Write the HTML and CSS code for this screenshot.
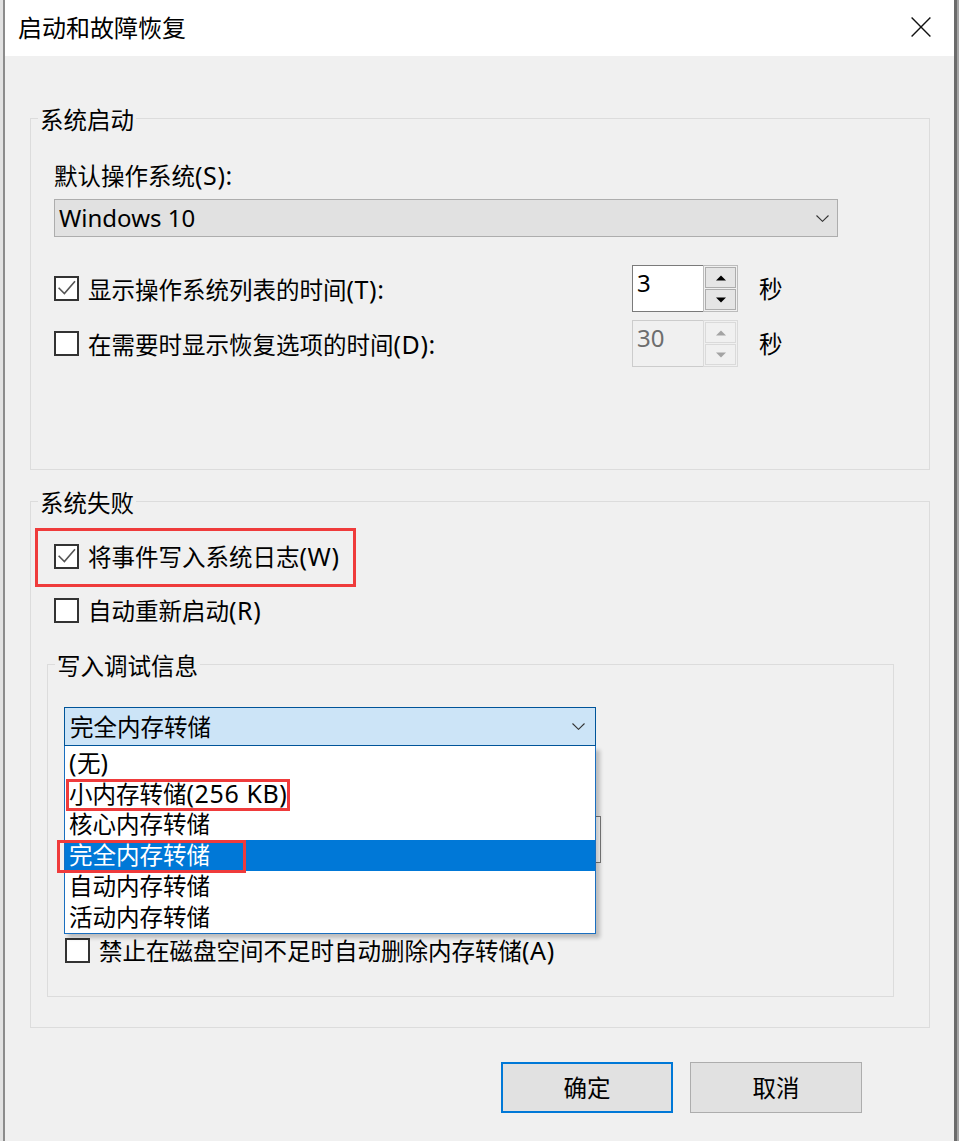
FILE: index.html
```html
<!DOCTYPE html>
<html lang="zh-CN">
<head>
<meta charset="utf-8">
<title>启动和故障恢复</title>
<link rel="stylesheet" href="styles.css">
</head>
<body>
<div class="screen">
  <div class="edge-left"></div>
  <div class="dialog">
    <div class="titlebar">
      <span class="title">启动和故障恢复</span>
      <span class="close"><svg width="20" height="20" viewBox="0 0 20 20"><path d="M0.6 0.6L19.4 19.4M19.4 0.6L0.6 19.4" stroke="#111" stroke-width="1.4" fill="none"/></svg></span>
    </div>
    <div class="content">
      <div class="group g1">
        <div class="legend lg1">系统启动</div>
        <div class="label">默认操作系统<span class="en">(S):</span></div>
        <div class="select">
          <span>Windows 10</span>
          <svg class="chev" width="13" height="7" viewBox="0 0 13 7"><path d="M0.5 0.5L6.5 6.3L12.5 0.5" stroke="#333" stroke-width="1.1" fill="none"/></svg>
        </div>
        <div class="row spin-row first">
          <span class="cb"><svg width="21" height="21" viewBox="0 0 21 21"><path d="M2.6 9.8L8.4 15.6L19 3.2" stroke="#555" stroke-width="1.6" fill="none"/></svg></span>
          <span class="cb-label wide">显示操作系统列表的时间<span class="en">(T):</span></span>
          <div class="spin">
            <div class="spin-text">3</div>
            <div class="spin-btns">
              <div class="spin-btn"><svg width="10" height="6" viewBox="0 0 10 6"><path d="M0 5.5L5 0.5L10 5.5Z" fill="#000"/></svg></div>
              <div class="spin-btn"><svg width="10" height="6" viewBox="0 0 10 6"><path d="M0 0.5L5 5.5L10 0.5Z" fill="#000"/></svg></div>
            </div>
          </div>
          <span class="unit">秒</span>
        </div>
        <div class="row spin-row second">
          <span class="cb"></span>
          <span class="cb-label wide">在需要时显示恢复选项的时间<span class="en">(D):</span></span>
          <div class="spin disabled">
            <div class="spin-text">30</div>
            <div class="spin-btns">
              <div class="spin-btn"><svg width="10" height="6" viewBox="0 0 10 6"><path d="M0 5.5L5 0.5L10 5.5Z" fill="#a3a3a3"/></svg></div>
              <div class="spin-btn"><svg width="10" height="6" viewBox="0 0 10 6"><path d="M0 0.5L5 5.5L10 0.5Z" fill="#a3a3a3"/></svg></div>
            </div>
          </div>
          <span class="unit">秒</span>
        </div>
      </div>

      <div class="group g2">
        <div class="legend lg1">系统失败</div>
        <div class="redbox">
          <span class="cb"><svg width="21" height="21" viewBox="0 0 21 21"><path d="M2.6 9.8L8.4 15.6L19 3.2" stroke="#555" stroke-width="1.6" fill="none"/></svg></span>
          <span class="cb-label">将事件写入系统日志<span class="en">(W)</span></span>
        </div>
        <div class="row plain r-restart">
          <span class="cb"></span>
          <span class="cb-label">自动重新启动<span class="en">(R)</span></span>
        </div>

        <div class="group g3">
          <div class="legend lg3">写入调试信息</div>
          <div class="combo-wrap">
            <div class="combo">
              <span>完全内存转储</span>
              <svg class="chev" width="13" height="7" viewBox="0 0 13 7"><path d="M0.5 0.5L6.5 6.3L12.5 0.5" stroke="#333" stroke-width="1.1" fill="none"/></svg>
            </div>
            <div class="list">
              <div class="item"><span class="en">(</span>无<span class="en">)</span></div>
              <div class="item">小内存转储<span class="en">(256 KB)</span></div>
              <div class="item">核心内存转储</div>
              <div class="item selected">完全内存转储</div>
              <div class="item">自动内存转储</div>
              <div class="item">活动内存转储</div>
              <div class="mark mark1"></div>
              <div class="mark mark2"></div>
            </div>
          </div>
          <div class="field"></div>
          <div class="row plain r-keep">
            <span class="cb"></span>
            <span class="cb-label">禁止在磁盘空间不足时自动删除内存转储<span class="en">(A)</span></span>
          </div>
        </div>
      </div>

      <div class="buttons">
        <div class="btn default">确定</div>
        <div class="btn">取消</div>
      </div>
    </div>
  </div>
  <div class="edge-right"></div>
</div>
</body>
</html>
```

FILE: styles.css
```css
html, body {
  margin: 0;
  padding: 0;
}
body {
  width: 959px;
  height: 1141px;
  overflow: hidden;
  background: #dcdcdc;
  font-family: "Noto Sans", "Noto Sans CJK SC", sans-serif;
  font-size: 23.5px;
  color: #000;
}
.en {
  font-size: 25px;
  letter-spacing: 0.6px;
}
.screen {
  display: flex;
  height: 1141px;
}
.edge-left {
  width: 3px;
  flex: none;
  background: #e2e2e2;
  border-right: 2px solid #8c8c8c;
}
.edge-right {
  width: 2px;
  flex: none;
  background: #a6a6a6;
  border-left: 3px solid #6b6b6b;
}
.dialog {
  width: 949px;
  flex: none;
  display: flex;
  flex-direction: column;
  background: #f0f0f0;
}
.titlebar {
  height: 56px;
  flex: none;
  background: #fff;
  display: flex;
  align-items: center;
  justify-content: space-between;
  padding: 0 23px 0 13px;
}
.title {
  font-size: 24px;
  line-height: 30px;
}
.close {
  width: 20px;
  height: 20px;
  display: flex;
  margin-top: -2px;
}
.content {
  padding: 62px 0 0 25px;
}
.group {
  box-sizing: border-box;
  border: 1px solid #dcdcdc;
}
.g1 {
  width: 900px;
  padding: 0 0 102px 23px;
}
.g2 {
  width: 900px;
  margin-top: 31px;
  padding: 0 0 30px 23px;
}
.g3 {
  width: 847px;
  margin: 39px 0 0 -7px;
  padding: 0 0 31px 16px;
}
.legend {
  width: fit-content;
  height: 30px;
  line-height: 30px;
  padding: 0 2px;
  background: #f0f0f0;
}
.lg1 {
  margin: -14px 0 0 -16px;
}
.lg3 {
  margin: -14px 0 0 -9px;
}
.label {
  margin-top: 25px;
  height: 30px;
  line-height: 30px;
}
.select {
  margin-top: 9px;
  width: 784px;
  height: 38px;
  box-sizing: border-box;
  border: 1px solid #adadad;
  background: #e1e1e1;
  display: flex;
  align-items: center;
  justify-content: space-between;
  padding: 0 8px 0 4px;
  font-size: 24px;
  line-height: 30px;
}
.chev {
  display: block;
  flex: none;
}
.row {
  display: flex;
  align-items: center;
}
.spin-row {
  height: 47px;
}
.spin-row.first {
  margin-top: 28px;
}
.spin-row.second {
  margin-top: 8px;
}
.cb {
  width: 25px;
  height: 25px;
  flex: none;
  box-sizing: border-box;
  border: 2px solid #333;
  background: #fff;
  margin-right: 9px;
  display: flex;
  align-items: center;
  justify-content: center;
}
.cb svg {
  display: block;
}
.cb-label {
  height: 30px;
  line-height: 30px;
  white-space: nowrap;
}
.cb-label.wide {
  width: 544px;
  flex: none;
}
.spin {
  display: flex;
  width: 106px;
  height: 47px;
  flex: none;
}
.spin-text {
  width: 71px;
  box-sizing: border-box;
  border: 1px solid #7a7a7a;
  border-right: none;
  background: #fff;
  padding: 2px 0 0 4px;
  line-height: 30px;
  font-size: 24px;
}
.spin-btns {
  width: 35px;
  box-sizing: border-box;
  border: 1px solid #bcbcbc;
  padding: 1px;
  display: flex;
  flex-direction: column;
  gap: 1px;
  background: #f0f0f0;
}
.spin-btn {
  flex: 1;
  box-sizing: border-box;
  border: 1px solid #adadad;
  background: #e5e5e5;
  display: flex;
  align-items: center;
  justify-content: center;
}
.spin-btn svg {
  display: block;
}
.spin.disabled .spin-text {
  background: #f0f0f0;
  border-color: #cccccc;
  color: #6d6d6d;
}
.spin.disabled .spin-btns {
  border-color: #dadada;
}
.spin.disabled .spin-btn {
  background: #f0f0f0;
  border-color: #dadada;
}
.unit {
  margin-left: 21px;
  line-height: 30px;
}
.redbox {
  display: flex;
  align-items: center;
  width: fit-content;
  margin: 10px 0 0 -19px;
  border: 3px solid #ef3b3b;
  padding: 10px 13px 13px 16px;
}
.plain {
  height: 30px;
}
.r-restart {
  margin-top: 8px;
}
.combo-wrap {
  position: relative;
  margin-top: 26px;
  width: 532px;
  height: 39px;
}
.combo {
  height: 39px;
  box-sizing: border-box;
  border: 1px solid #005499;
  background: #cce4f7;
  display: flex;
  align-items: center;
  justify-content: space-between;
  padding: 0 10px 0 5px;
  line-height: 30px;
}
.list {
  position: absolute;
  left: 0;
  top: 39px;
  width: 532px;
  box-sizing: border-box;
  border: 1px solid #1a6fc0;
  border-top: none;
  padding-top: 1px;
  background: #fff;
  box-shadow: 4px 4px 4px rgba(0, 0, 0, 0.22);
  z-index: 2;
}
.item {
  height: 31px;
  line-height: 31px;
  padding-left: 4px;
  white-space: nowrap;
}
.item.selected {
  background: #0078d7;
  color: #fff;
}
.mark {
  position: absolute;
  box-sizing: border-box;
  border: 3px solid #ef3b3b;
}
.mark1 {
  left: 1px;
  top: 33px;
  width: 224px;
  height: 32px;
}
.mark2 {
  left: -8px;
  top: 94px;
  width: 189px;
  height: 33px;
}
.field {
  margin-top: 70px;
  width: 537px;
  height: 47px;
  box-sizing: border-box;
  border: 1px solid #7a7a7a;
  background: #fff;
}
.r-keep {
  margin: 72px 0 0 1px;
}
.buttons {
  margin-top: 34px;
  display: flex;
  justify-content: flex-end;
  gap: 17px;
  padding-right: 92px;
}
.btn {
  width: 172px;
  height: 51px;
  box-sizing: border-box;
  border: 1px solid #adadad;
  background: #e1e1e1;
  display: flex;
  align-items: center;
  justify-content: center;
  line-height: 30px;
}
.btn.default {
  border: 2px solid #0078d7;
}
```
